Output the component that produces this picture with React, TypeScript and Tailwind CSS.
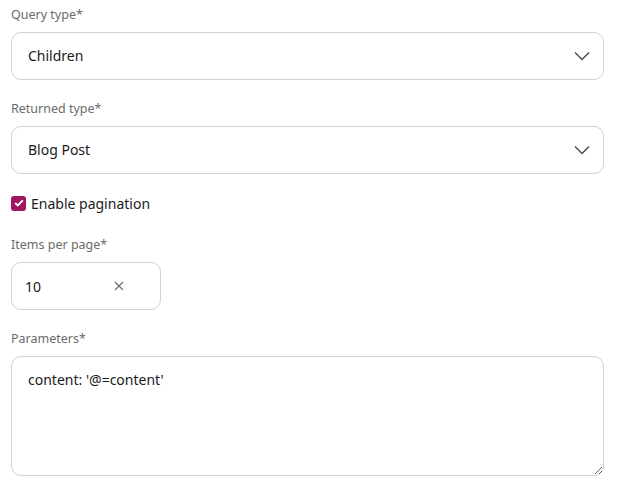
import React from "react";

const Label = ({ children }: { children: React.ReactNode }) => (
  <div className="text-[12.5px] leading-[18px] text-[#6b6b6b] mb-[8px]">{children}</div>
);

function Chevron() {
  return (
    <svg width="16" height="10" viewBox="0 0 16 10" className="shrink-0">
      <path d="M1 1.5 L8 8.5 L15 1.5" fill="none" stroke="#4b4f58" strokeWidth="1.5" />
    </svg>
  );
}

function Select({ value }: { value: string }) {
  return (
    <div className="h-[48px] w-[593px] rounded-[10px] border border-[#d1d1d1] bg-white flex items-center justify-between pl-[16px] pr-[13px]">
      <span className="text-[14px] leading-[20px] text-[#1b1b1b]">{value}</span>
      <Chevron />
    </div>
  );
}

export default function App() {
  return (
    <div className="w-[624px] h-[485px] bg-white pl-[11px] pt-[6px]" style={{ fontFamily: '"Noto Sans", "Open Sans", sans-serif' }}>
      <Label>Query type*</Label>
      <Select value="Children" />

      <div className="mt-[20px]">
        <Label>Returned type*</Label>
        <Select value="Blog Post" />
      </div>

      <div className="mt-[20px] flex items-center gap-[5px] h-[18px]">
        <div className="w-[15px] h-[15px] rounded-[3px] bg-[#a2165f] flex items-center justify-center">
          <svg width="10" height="8" viewBox="0 0 10 8">
            <path d="M1.2 4 L3.8 6.4 L8.8 1.4" fill="none" stroke="white" strokeWidth="2" />
          </svg>
        </div>
        <span className="text-[14px] text-[#1b1b1b]">Enable pagination</span>
      </div>

      <div className="mt-[24px]">
        <Label>Items per page*</Label>
        <div className="h-[48px] w-[150px] rounded-[10px] border border-[#d1d1d1] bg-white flex items-center pl-[13px]">
          <span className="text-[14px] text-[#1b1b1b] w-[89px]">10</span>
          <svg width="10" height="10" viewBox="0 0 10 10">
            <path d="M1 1 L9 9 M9 1 L1 9" fill="none" stroke="#6b6b6b" strokeWidth="1.1" />
          </svg>
        </div>
      </div>

      <div className="mt-[20px]">
        <Label>Parameters*</Label>
        <textarea
          readOnly
          defaultValue="content: '@=content'"
          className="block h-[120px] w-[593px] rounded-[10px] border border-[#d1d1d1] bg-white px-[16px] pt-[12px] text-[14px] text-[#1b1b1b] outline-none resize-y"
        />
      </div>
    </div>
  );
}
